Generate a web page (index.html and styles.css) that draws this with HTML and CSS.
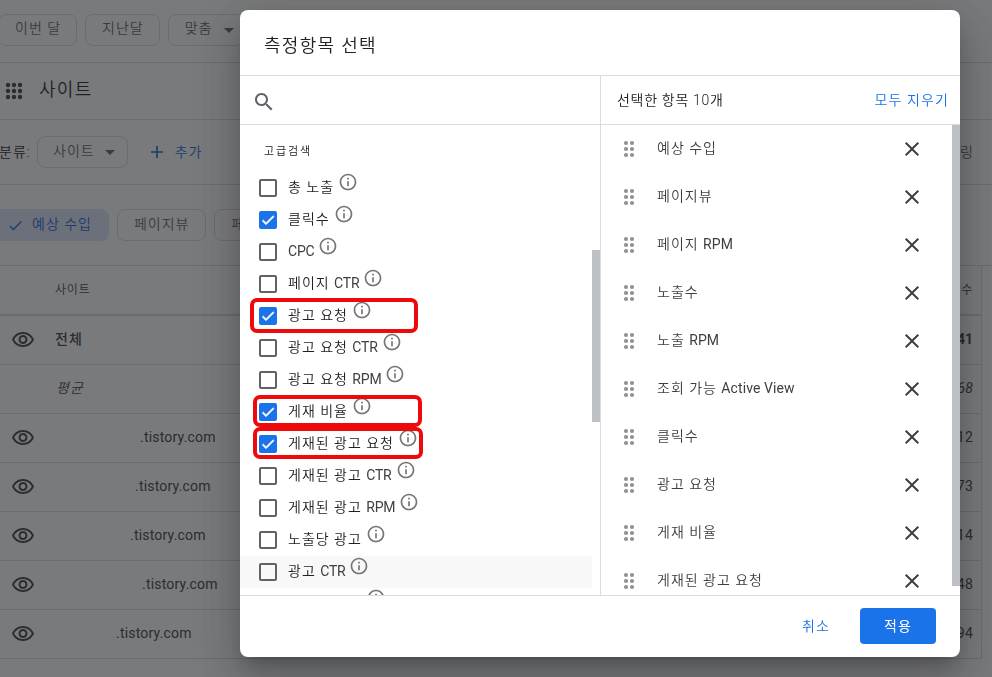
FILE: index.html
```
<!DOCTYPE html>
<html lang="ko">
<head>
<meta charset="UTF-8">
<meta name="viewport" content="width=device-width, initial-scale=1.0">
<title>측정항목 선택</title>
<link rel="stylesheet" href="styles.css">
</head>
<body>
<!-- 아이콘 모음 -->
<svg class="symbols">
  <symbol id="eye" viewBox="0 0 24 24"><path d="M12 6c3.79 0 7.17 2.13 8.82 5.5C19.17 14.87 15.79 17 12 17s-7.17-2.13-8.82-5.5C4.83 8.13 8.21 6 12 6m0-2C7 4 2.73 7.11 1 11.5 2.73 15.89 7 19 12 19s9.27-3.11 11-7.5C21.27 7.11 17 4 12 4zm0 5c1.38 0 2.5 1.12 2.5 2.5S13.38 14 12 14s-2.500-1.12-2.500-2.500S10.620 9 12 9m0-2c-2.480 0-4.500 2.020-4.500 4.500S9.520 16 12 16s4.500-2.020 4.500-4.500S14.480 7 12 7z"/></symbol>
  <symbol id="apps" viewBox="0 0 18 18"><circle cx="3" cy="3" r="2.200"/><circle cx="9" cy="3" r="2.200"/><circle cx="15" cy="3" r="2.200"/><circle cx="3" cy="9" r="2.200"/><circle cx="9" cy="9" r="2.200"/><circle cx="15" cy="9" r="2.200"/><circle cx="3" cy="15" r="2.200"/><circle cx="9" cy="15" r="2.200"/><circle cx="15" cy="15" r="2.200"/></symbol>
  <symbol id="drag" viewBox="0 0 12 18"><circle cx="3" cy="3" r="2.100"/><circle cx="9" cy="3" r="2.100"/><circle cx="3" cy="9" r="2.100"/><circle cx="9" cy="9" r="2.100"/><circle cx="3" cy="15" r="2.100"/><circle cx="9" cy="15" r="2.100"/></symbol>
  <symbol id="info" viewBox="0 0 24 24"><path d="M11 7h2v2h-2zm0 4h2v6h-2zm1-9C6.480 2 2 6.480 2 12s4.480 10 10 10 10-4.480 10-10S17.520 2 12 2zm0 18c-4.410 0-8-3.590-8-8s3.590-8 8-8 8 3.590 8 8-3.590 8-8 8z"/></symbol>
  <symbol id="close" viewBox="0 0 24 24"><path d="M19 6.410L17.590 5 12 10.590 6.410 5 5 6.410 10.590 12 5 17.590 6.410 19 12 13.410 17.590 19 19 17.590 13.410 12z"/></symbol>
  <symbol id="search" viewBox="0 0 24 24"><path d="M15.500 14h-.790l-.280-.270C15.410 12.590 16 11.110 16 9.500 16 5.910 13.090 3 9.500 3S3 5.910 3 9.500 5.910 16 9.500 16c1.610 0 3.090-.590 4.230-1.570l.270.280v.790l5 4.990L20.490 19l-4.990-5zm-6 0C7.010 14 5 11.990 5 9.500S7.010 5 9.500 5 14 7.010 14 9.500 11.990 14 9.500 14z"/></symbol>
  <symbol id="check" viewBox="0 0 24 24"><path d="M9 16.170L4.830 12l-1.420 1.410L9 19 21 7l-1.410-1.410z"/></symbol>
  <symbol id="plus" viewBox="0 0 12 12"><path d="M5.200 0h1.600v5.200H12v1.600H6.800V12H5.200V6.800H0V5.200h5.200z"/></symbol>
</svg>

<div class="page">
  <div class="bar dates">
    <button class="chip">이번 달</button>
    <button class="chip">지난달</button>
    <button class="chip">맞춤 <i class="arrow"></i></button>
  </div>
  <div class="bar title">
    <svg class="apps"><use href="#apps"/></svg>
    <span>사이트</span>
  </div>
  <div class="bar group">
    <span class="group-label">분류:</span>
    <button class="chip">사이트 <i class="arrow"></i></button>
    <span class="add"><svg><use href="#plus"/></svg>추가</span>
    <span class="filter">링</span>
  </div>
  <div class="bar metrics">
    <button class="chip on"><svg><use href="#check"/></svg>예상 수입</button>
    <button class="chip">페이지뷰</button>
    <button class="chip">페</button>
  </div>
  <div class="table">
    <div class="row head"><span class="view"></span><span class="site">사이트</span><span class="num">수</span></div>
    <div class="row total"><span class="view"><svg><use href="#eye"/></svg></span><span class="site">전체</span><span class="num">41</span></div>
    <div class="row avg"><span class="view"></span><span class="site">평균</span><span class="num">68</span></div>
    <div class="row"><span class="view"><svg><use href="#eye"/></svg></span><span class="site blog1">.tistory.com</span><span class="num">12</span></div>
    <div class="row"><span class="view"><svg><use href="#eye"/></svg></span><span class="site blog2">.tistory.com</span><span class="num">73</span></div>
    <div class="row"><span class="view"><svg><use href="#eye"/></svg></span><span class="site blog3">.tistory.com</span><span class="num">14</span></div>
    <div class="row"><span class="view"><svg><use href="#eye"/></svg></span><span class="site blog4">.tistory.com</span><span class="num">48</span></div>
    <div class="row"><span class="view"><svg><use href="#eye"/></svg></span><span class="site blog5">.tistory.com</span><span class="num">94</span></div>
  </div>
</div>

<div class="overlay">
  <div class="dialog">
    <h1>측정항목 선택</h1>
    <div class="panels">
      <div class="left">
        <div class="search"><svg><use href="#search"/></svg></div>
        <div class="list">
          <div class="category">고급검색</div>
          <div class="item"><i class="box"></i><span>총 노출</span><svg class="info"><use href="#info"/></svg></div>
          <div class="item"><i class="box checked"><svg><use href="#check"/></svg></i><span>클릭수</span><svg class="info"><use href="#info"/></svg></div>
          <div class="item"><i class="box"></i><span><b>CPC</b></span><svg class="info"><use href="#info"/></svg></div>
          <div class="item"><i class="box"></i><span>페이지 <b>CTR</b></span><svg class="info"><use href="#info"/></svg></div>
          <div class="item"><i class="box checked"><svg><use href="#check"/></svg></i><span>광고 요청</span><svg class="info"><use href="#info"/></svg></div>
          <div class="item"><i class="box"></i><span>광고 요청 <b>CTR</b></span><svg class="info"><use href="#info"/></svg></div>
          <div class="item"><i class="box"></i><span>광고 요청 <b>RPM</b></span><svg class="info"><use href="#info"/></svg></div>
          <div class="item"><i class="box checked"><svg><use href="#check"/></svg></i><span>게재 비율</span><svg class="info"><use href="#info"/></svg></div>
          <div class="item"><i class="box checked"><svg><use href="#check"/></svg></i><span>게재된 광고 요청</span><svg class="info"><use href="#info"/></svg></div>
          <div class="item"><i class="box"></i><span>게재된 광고 <b>CTR</b></span><svg class="info"><use href="#info"/></svg></div>
          <div class="item"><i class="box"></i><span>게재된 광고 <b>RPM</b></span><svg class="info"><use href="#info"/></svg></div>
          <div class="item"><i class="box"></i><span>노출당 광고</span><svg class="info"><use href="#info"/></svg></div>
          <div class="item hover"><i class="box"></i><span>광고 <b>CTR</b></span><svg class="info"><use href="#info"/></svg></div>
          <div class="item"><i class="box"></i><span class="blank"></span><svg class="info"><use href="#info"/></svg></div>
          <div class="thumb"></div>
          <!-- 빨간색 강조 표시 -->
          <div class="mark mark1"></div>
          <div class="mark mark2"></div>
          <div class="mark mark3"></div>
        </div>
      </div>
      <div class="right">
        <div class="selected-head"><span>선택한 항목 10개</span><a class="clear">모두 지우기</a></div>
        <div class="list">
          <div class="selected"><svg class="drag"><use href="#drag"/></svg><span>예상 수입</span><svg class="close"><use href="#close"/></svg></div>
          <div class="selected"><svg class="drag"><use href="#drag"/></svg><span>페이지뷰</span><svg class="close"><use href="#close"/></svg></div>
          <div class="selected"><svg class="drag"><use href="#drag"/></svg><span>페이지 <b>RPM</b></span><svg class="close"><use href="#close"/></svg></div>
          <div class="selected"><svg class="drag"><use href="#drag"/></svg><span>노출수</span><svg class="close"><use href="#close"/></svg></div>
          <div class="selected"><svg class="drag"><use href="#drag"/></svg><span>노출 <b>RPM</b></span><svg class="close"><use href="#close"/></svg></div>
          <div class="selected"><svg class="drag"><use href="#drag"/></svg><span>조회 가능 <b>Active View</b></span><svg class="close"><use href="#close"/></svg></div>
          <div class="selected"><svg class="drag"><use href="#drag"/></svg><span>클릭수</span><svg class="close"><use href="#close"/></svg></div>
          <div class="selected"><svg class="drag"><use href="#drag"/></svg><span>광고 요청</span><svg class="close"><use href="#close"/></svg></div>
          <div class="selected"><svg class="drag"><use href="#drag"/></svg><span>게재 비율</span><svg class="close"><use href="#close"/></svg></div>
          <div class="selected"><svg class="drag"><use href="#drag"/></svg><span>게재된 광고 요청</span><svg class="close"><use href="#close"/></svg></div>
          <div class="thumb"></div>
        </div>
      </div>
    </div>
    <div class="footer">
      <button class="cancel">취소</button>
      <button class="apply">적용</button>
    </div>
  </div>
</div>
</body>
</html>
```
FILE: styles.css
```
* {
  box-sizing: border-box;
}
body {
  margin: 0;
  height: 677px;
  overflow: hidden;
  background: #fff;
  color: #202124;
  font-family: Roboto, "Noto Sans CJK KR", sans-serif;
  font-size: 14px;
  font-weight: 350;
  line-height: 20px;
  letter-spacing: 1px;
  white-space: nowrap;
}
button {
  font: inherit;
  letter-spacing: inherit;
  cursor: pointer;
}
svg {
  fill: currentColor;
  flex: none;
}
/* 영문, 숫자 */
b {
  color: #3c4043;
  font-weight: 400;
  letter-spacing: -0.2px;
}
.symbols {
  display: none;
}

/* 뒤쪽 페이지 */
.page {
  width: 992px;
  height: 677px;
  overflow: hidden;
}
.bar {
  display: flex;
  align-items: center;
  border-bottom: 1px solid #dadce0;
}
.chip {
  display: flex;
  align-items: center;
  height: 32px;
  padding: 0 15px 3px 16px;
  border: 1px solid #dadce0;
  border-radius: 8px;
  background: none;
  color: #5f6368;
}
.arrow {
  margin: 4px -6px 0 12px;
  border: 5px solid transparent;
  border-top-color: #5f6368;
  border-bottom: 0;
}
.dates {
  height: 63px;
  padding-bottom: 3px;
  gap: 8px;
  margin-left: -2px;
}
.title {
  height: 57px;
  padding-left: 5px;
  font-size: 18px;
  letter-spacing: 1.3px;
  gap: 16px;
}
.title span {
  padding-bottom: 2px;
}
.apps {
  width: 18px;
  height: 18px;
  color: #3c4043;
}
.group {
  height: 65px;
}
.group-label {
  width: 38px;
  margin-left: -1px;
}
.group .chip {
  padding: 0 18px 3px 15px;
}
.group .arrow {
  margin-left: 10px;
}
.add {
  display: flex;
  align-items: center;
  gap: 12px;
  margin-left: 23px;
  color: #1967d2;
}
.add svg {
  width: 12px;
  height: 12px;
}
.filter {
  margin-left: auto;
  padding-right: 18px;
  color: #5f6368;
}
.metrics {
  height: 81px;
  gap: 8px;
  margin-left: -8px;
}
.metrics .chip {
  padding-right: 16px;
}
.chip.on {
  gap: 8px;
  padding-left: 14px;
  border-color: #dbe7fb;
  background: #dbe7fb;
  color: #1967d2;
}
.chip.on svg {
  width: 17px;
  height: 17px;
  margin-top: 4px;
}
.table {
  width: 982px;
  border-right: 1px solid #dadce0;
}
.row {
  display: flex;
  align-items: center;
  height: 49px;
  padding-bottom: 2px;
  border-bottom: 1px solid #dadce0;
  color: #3c4043;
}
.view {
  width: 55px;
  padding: 2px 0 0 11px;
}
.view svg {
  display: block;
  width: 24px;
  height: 24px;
}
.site {
  flex: 1;
}
.num {
  padding-right: 8px;
}
.row .site,
.row .num {
  font-weight: 400;
  letter-spacing: 0.2px;
}
.row.head {
  height: 50px;
  border-bottom-width: 2px;
  padding-bottom: 1px;
}
.row.head .site,
.row.head .num {
  font-size: 12px;
  font-weight: 350;
  letter-spacing: 0.8px;
}
.row.total .site {
  font-weight: 500;
  letter-spacing: 1px;
}
.row.total .num {
  font-weight: 700;
  letter-spacing: 0;
}
.row.avg {
  font-style: italic;
}
.row.avg .site {
  padding-left: 1px;
  font-weight: 350;
  letter-spacing: 1px;
}
.row .blog1 { padding-left: 85px; }
.row .blog2 { padding-left: 80px; }
.row .blog3 { padding-left: 75px; }
.row .blog4 { padding-left: 87px; }
.row .blog5 { padding-left: 61px; }

/* 대화상자 */
.overlay {
  position: fixed;
  inset: 0;
  padding-top: 10px;
  background: rgba(32, 33, 36, 0.6);
}
.dialog {
  display: flex;
  flex-direction: column;
  width: 720px;
  height: 647px;
  margin-left: 240px;
  border-radius: 8px;
  background: #fff;
  overflow: hidden;
  box-shadow: 0 11px 15px -7px rgba(0, 0, 0, 0.2), 0 24px 38px 3px rgba(0, 0, 0, 0.14), 0 9px 46px 8px rgba(0, 0, 0, 0.12);
}
h1 {
  margin: 0;
  height: 66px;
  padding: 25px 24px 0;
  border-bottom: 1px solid #dadce0;
  font-size: 18px;
  font-weight: 350;
  line-height: 22px;
  letter-spacing: 1.3px;
}
.panels {
  display: flex;
  height: 519px;
}
.left {
  width: 360px;
}
.right {
  width: 360px;
  border-left: 1px solid #dadce0;
}
.search,
.selected-head {
  display: flex;
  align-items: center;
  height: 49px;
  border-bottom: 1px solid #dadce0;
}
.search {
  padding: 4px 0 0 12px;
  color: #5f6368;
}
.search svg {
  width: 24px;
  height: 24px;
}
.selected-head {
  justify-content: space-between;
  padding: 0 11px 0 16px;
  letter-spacing: 0.7px;
}
.clear {
  color: #1a73e8;
  letter-spacing: 1.1px;
}
.list {
  position: relative;
  height: 470px;
  overflow: hidden;
}
.category {
  height: 47px;
  padding: 17px 24px 0;
  font-size: 11px;
  letter-spacing: 1.9px;
}
.item {
  display: flex;
  align-items: center;
  width: 352px;
  height: 32px;
  padding-left: 19px;
}
.item.hover {
  background: #f8f8f8;
}
.item span {
  margin: -3px 4px 0 11px;
}
.item .blank {
  width: 74px;
}
.box {
  width: 18px;
  height: 18px;
  border: 2px solid #5f6368;
  border-radius: 2px;
}
.box.checked {
  border: 0;
  background: #1a73e8;
  color: #fff;
}
.box svg {
  display: block;
  width: 16px;
  height: 16px;
  margin: 1px;
  stroke: #fff;
}
.info {
  width: 20px;
  height: 20px;
  margin-top: -12px;
  color: #757575;
}
.thumb {
  position: absolute;
  right: 0;
  top: 0;
  width: 8px;
  height: 461px;
  background: #bdc1c6;
}
.left .thumb {
  top: 125px;
  height: 172px;
}
.mark {
  position: absolute;
  border: 4px solid #ee0a0a;
  border-radius: 7px;
}
.mark1 { left: 10px; top: 173px; width: 168px; height: 35px; }
.mark2 { left: 13px; top: 270px; width: 169px; height: 32px; }
.mark3 { left: 13px; top: 302px; width: 170px; height: 32px; }
.selected {
  display: flex;
  align-items: center;
  height: 48px;
  padding: 0 38px 0 22px;
  color: #3c4043;
}
.selected span {
  flex: 1;
  padding: 0 0 3px 22px;
}
.selected b {
  letter-spacing: 0.1px;
}
.drag {
  width: 12px;
  height: 18px;
  color: #8f9195;
}
.close {
  width: 24px;
  height: 24px;
  margin-left: auto;
}
.right .close {
  margin-right: -2px;
}
.footer {
  display: flex;
  justify-content: flex-end;
  align-items: center;
  height: 62px;
  padding: 0 24px 1px;
  border-top: 1px solid #dadce0;
}
.footer button {
  height: 36px;
  padding: 0;
  border: 0;
  border-radius: 4px;
}
.footer .cancel {
  width: 60px;
  margin-right: 14px;
  background: none;
  color: #1a73e8;
}
.footer .apply {
  width: 76px;
  background: #1a73e8;
  color: #fff;
  font-weight: 400;
}
```
